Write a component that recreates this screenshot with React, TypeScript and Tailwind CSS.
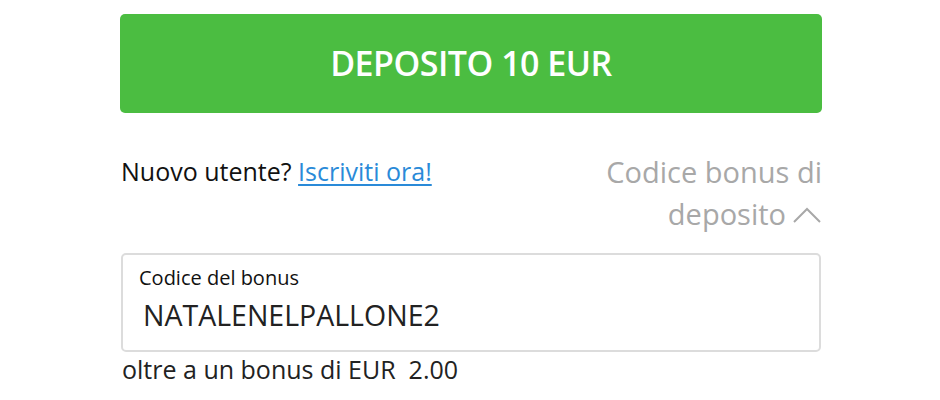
import React from "react";

export default function App() {
  return (
    <div className="w-[940px] h-[400px] bg-white overflow-hidden" style={{ fontFamily: '"Open Sans", "Noto Sans", sans-serif' }}>
      <div className="w-[702px] ml-[120px] pt-[14px]">
        <button className="w-full h-[99px] rounded-[5px] bg-[#4bbd41] text-white text-[34px] font-semibold flex items-center justify-center tracking-[-0.5px]">
          DEPOSITO 10 EUR
        </button>
        <div className="flex justify-between mt-[38px]">
          <div className="text-[25px] leading-[40px] text-[#111] pl-[1px]">
            Nuovo utente?{" "}
            <a href="#" className="text-[#2a8ad8] underline underline-offset-[3px] decoration-[1.5px]">Iscriviti ora!</a>
          </div>
          <div className="text-[29px] leading-[42px] text-[#a8a8a8] text-right w-[260px]">
            <div>Codice bonus di</div>
            <div className="flex items-center justify-end gap-[6px]">
              deposito
              <svg width="30" height="18" viewBox="0 0 30 18" fill="none" className="mt-[2px]">
                <path d="M2 16 L15 3 L28 16" stroke="#a8a8a8" strokeWidth="2" />
              </svg>
            </div>
          </div>
        </div>
        <div className="mt-[18px] mx-[1px] h-[99px] border-2 border-[#dcdcdc] rounded-[5px] px-[16px] pt-[10px]">
          <div className="text-[20px] leading-[26px] text-[#111]">Codice del bonus</div>
          <div className="text-[28.5px] leading-[40px] text-[#222] pl-[4px] mt-[4px]">NATALENELPALLONE2</div>
        </div>
        <div className="text-[25px] leading-[34px] text-[#222] pl-[2px] mt-[0px] whitespace-pre">oltre a un bonus di EUR  2.00</div>
      </div>
    </div>
  );
}
